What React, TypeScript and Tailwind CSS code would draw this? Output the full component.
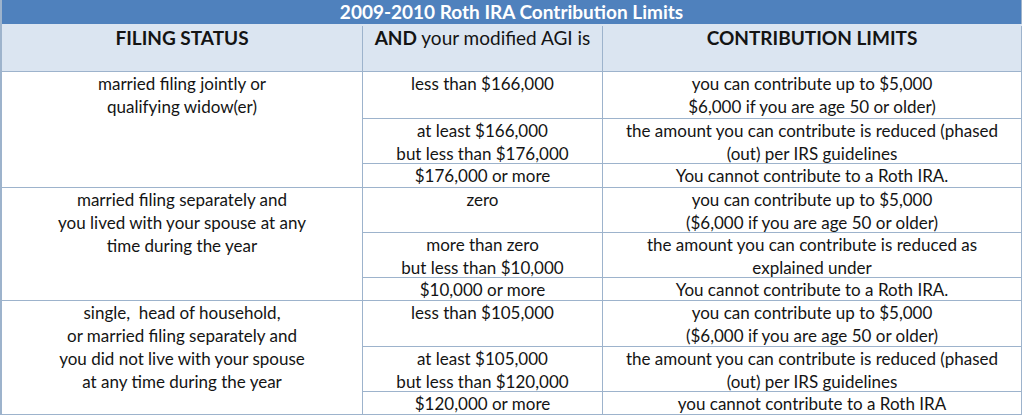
type Row = { agi: string[]; limit: string[]; h: string };

type Group = { status: string[]; rows: Row[] };

const groups: Group[] = [
  {
    status: ["married filing jointly or", "qualifying widow(er)"],
    rows: [
      { agi: ["less than $166,000"], limit: ["you can contribute up to $5,000", "$6,000 if you are age 50 or older)"], h: "h-[47px]" },
      { agi: ["at least $166,000", "but less than $176,000"], limit: ["the amount you can contribute is reduced (phased", "(out) per IRS guidelines"], h: "h-[45px]" },
      { agi: ["$176,000 or more"], limit: ["You cannot contribute to a Roth IRA."], h: "h-[23px]" },
    ],
  },
  {
    status: ["married filing separately and", "you lived with your spouse at any", "time during the year"],
    rows: [
      { agi: ["zero"], limit: ["you can contribute up to $5,000", "($6,000 if you are age 50 or older)"], h: "h-[45px]" },
      { agi: ["more than zero", "but less than $10,000"], limit: ["the amount you can contribute is reduced as", "explained under"], h: "h-[45px]" },
      { agi: ["$10,000 or more"], limit: ["You cannot contribute to a Roth IRA."], h: "h-[22px]" },
    ],
  },
  {
    status: ["single,\u00a0 head of household,", "or married filing separately and", "you did not live with your spouse", "at any time during the year"],
    rows: [
      { agi: ["less than $105,000"], limit: ["you can contribute up to $5,000", "($6,000 if you are age 50 or older)"], h: "h-[46px]" },
      { agi: ["at least $105,000", "but less than $120,000"], limit: ["the amount you can contribute is reduced (phased", "(out) per IRS guidelines"], h: "h-[45px]" },
      { agi: ["$120,000 or more"], limit: ["you cannot contribute to a Roth IRA"], h: "h-[22px]" },
    ],
  },
];

const Lines = ({ lines }: { lines: string[] }) => (
  <>
    {lines.map((l, i) => (
      <div key={i}>{l}</div>
    ))}
  </>
);

export default function App() {
  return (
    <div className="w-[1024px] h-[418px] bg-white text-[#141414] text-[17px] leading-[23px] font-['Lato','Open_Sans',sans-serif]">
      <div className="w-[1022px] border-l-2 border-[#9db3cc]">
        <div className="h-[24px] bg-[#4f81bd] text-white font-bold text-[19px] text-center leading-[24px] border-r border-[#9db3cc]">
          2009-2010 Roth IRA Contribution Limits
        </div>
        <div className="flex h-[48px] bg-[#dbe5f1] border-b border-[#9db3cc] text-center text-[19px] pt-[2px]">
          <div className="w-[361px] border-r border-[#9db3cc] font-bold">FILING STATUS</div>
          <div className="w-[240px] border-r border-[#9db3cc]">
            <span className="font-bold">AND</span> your modified AGI is
          </div>
          <div className="flex-1 border-r border-[#9db3cc] font-bold">CONTRIBUTION LIMITS</div>
        </div>
        {groups.map((g, gi) => (
          <div key={gi} className="flex border-b border-[#9db3cc]">
            <div className="w-[361px] border-r border-[#9db3cc] text-center">
              <Lines lines={g.status} />
            </div>
            <div className="flex-1 flex flex-col">
              {g.rows.map((r, ri) => (
                <div
                  key={ri}
                  className={`flex ${r.h} ${ri < g.rows.length - 1 ? "border-b border-[#9db3cc]" : ""}`}
                >
                  <div className="w-[240px] border-r border-[#9db3cc] text-center">
                    <Lines lines={r.agi} />
                  </div>
                  <div className="flex-1 border-r border-[#9db3cc] text-center">
                    <Lines lines={r.limit} />
                  </div>
                </div>
              ))}
            </div>
          </div>
        ))}
      </div>
    </div>
  );
}
